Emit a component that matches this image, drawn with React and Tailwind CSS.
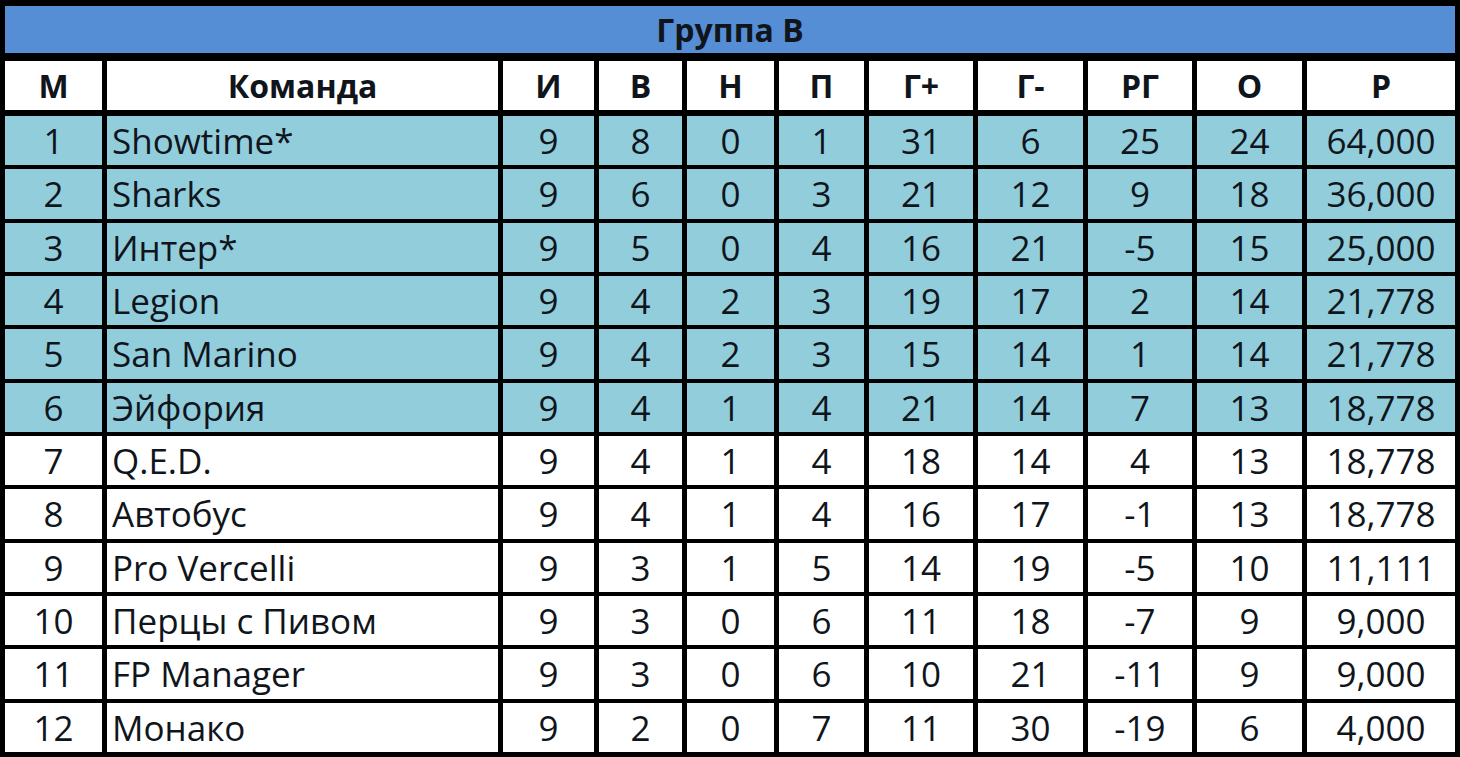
import React from 'react';

const cols = 'grid grid-cols-[97px_391px_91px_83px_87px_85px_104px_105px_104px_105px_148px] gap-x-[5px]';

const heads = ['М', 'Команда', 'И', 'В', 'Н', 'П', 'Г+', 'Г-', 'РГ', 'О', 'Р'];

const rows = [
    [1, 'Showtime*', 9, 8, 0, 1, 31, 6, 25, 24, '64,000'],
    [2, 'Sharks', 9, 6, 0, 3, 21, 12, 9, 18, '36,000'],
    [3, 'Интер*', 9, 5, 0, 4, 16, 21, -5, 15, '25,000'],
    [4, 'Legion', 9, 4, 2, 3, 19, 17, 2, 14, '21,778'],
    [5, 'San Marino', 9, 4, 2, 3, 15, 14, 1, 14, '21,778'],
    [6, 'Эйфория', 9, 4, 1, 4, 21, 14, 7, 13, '18,778'],
    [7, 'Q.E.D.', 9, 4, 1, 4, 18, 14, 4, 13, '18,778'],
    [8, 'Автобус', 9, 4, 1, 4, 16, 17, -1, 13, '18,778'],
    [9, 'Pro Vercelli', 9, 3, 1, 5, 14, 19, -5, 10, '11,111'],
    [10, 'Перцы с Пивом', 9, 3, 0, 6, 11, 18, -7, 9, '9,000'],
    [11, 'FP Manager', 9, 3, 0, 6, 10, 21, -11, 9, '9,000'],
    [12, 'Монако', 9, 2, 0, 7, 11, 30, -19, 6, '4,000'],
];

export default function App() {
    return (
        <div className="w-[1460px] h-[757px] bg-black pt-[6px] px-[5px] pb-[5px] flex flex-col font-['Open_Sans',sans-serif] text-[#10151c]">
            {/* заголовок группы */}
            <div className="h-[47px] bg-[#558ed5] flex items-center justify-center text-[32px] font-bold leading-none">
                Группа B
            </div>

            <div className={`${cols} mt-[8px] h-[49px]`}>
                {heads.map(h => (
                    <div key={h} className="bg-white flex items-center justify-center text-[32px] font-bold leading-none">
                        {h}
                    </div>
                ))}
            </div>

            <div className={`${cols} mt-[6px] flex-1 grid-rows-[repeat(12,1fr)] gap-y-[4px]`}>
                {rows.map(r => {
                    const bg = r[0] <= 6 ? 'bg-[#92cddc]' : 'bg-white';
                    return r.map((v, i) => (
                        <div
                            key={`${r[0]}-${i}`}
                            className={`${bg} flex items-center text-[35px] leading-none ${i === 1 ? 'justify-start pl-[5px]' : 'justify-center'}`}
                        >
                            {v}
                        </div>
                    ));
                })}
            </div>
        </div>
    );
}
